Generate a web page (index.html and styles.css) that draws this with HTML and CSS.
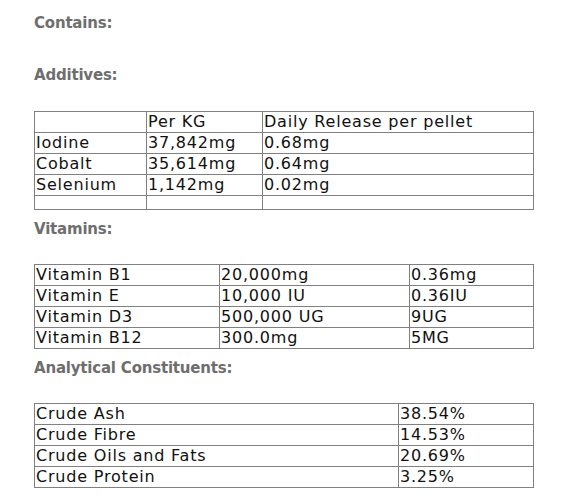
FILE: index.html
```html
<!DOCTYPE html>
<html>
<head>
<meta charset="utf-8">
<link rel="stylesheet" href="styles.css">
</head>
<body>
<div class="page">
  <h3 class="heading first">Contains:</h3>
  <h3 class="heading gap-top">Additives:</h3>
  <table class="data">
    <colgroup><col class="w112"><col class="w116"><col></colgroup>
    <tr><td></td><td>Per KG</td><td>Daily Release per pellet</td></tr>
    <tr><td>Iodine</td><td>37,842mg</td><td>0.68mg</td></tr>
    <tr><td>Cobalt</td><td>35,614mg</td><td>0.64mg</td></tr>
    <tr><td>Selenium</td><td>1,142mg</td><td>0.02mg</td></tr>
    <tr class="empty"><td></td><td></td><td></td></tr>
  </table>
  <h3 class="heading">Vitamins:</h3>
  <table class="data">
    <colgroup><col class="w185"><col class="w190"><col></colgroup>
    <tr><td>Vitamin B1</td><td>20,000mg</td><td>0.36mg</td></tr>
    <tr><td>Vitamin E</td><td>10,000 IU</td><td>0.36IU</td></tr>
    <tr><td>Vitamin D3</td><td>500,000 UG</td><td>9UG</td></tr>
    <tr><td>Vitamin B12</td><td>300.0mg</td><td>5MG</td></tr>
  </table>
  <h3 class="heading">Analytical Constituents:</h3>
  <table class="data">
    <colgroup><col class="w364"><col></colgroup>
    <tr><td>Crude Ash</td><td>38.54%</td></tr>
    <tr><td>Crude Fibre</td><td>14.53%</td></tr>
    <tr><td>Crude Oils and Fats</td><td>20.69%</td></tr>
    <tr><td>Crude Protein</td><td>3.25%</td></tr>
  </table>
</div>
</body>
</html>
```

FILE: styles.css
```css
html, body {
  margin: 0;
  padding: 0;
  background: #ffffff;
}
.page {
  padding: 0 0 0 34px;
  width: 500px;
  font-family: "DejaVu Sans", "Liberation Sans", sans-serif;
}
.heading {
  margin: 9px 0 25px 0;
  font-size: 15px;
  line-height: 20px;
  font-weight: bold;
  color: #6e6e6e;
  letter-spacing: -0.2px;
}
.heading.first {
  margin-top: 13px;
  margin-bottom: 0;
}
.heading.gap-top {
  margin-top: 32px;
  margin-bottom: 26px;
}
.data {
  width: 500px;
  border-collapse: collapse;
  table-layout: fixed;
}
.data td {
  border: 1px solid #808080;
  padding: 0 0 0 1px;
  height: 20px;
  font-size: 16px;
  line-height: 20px;
  color: #111111;
  letter-spacing: 0.8px;
  white-space: nowrap;
  overflow: hidden;
}
.data .empty td {
  height: 13px;
  line-height: 13px;
}
.w112 { width: 112px; }
.w116 { width: 116px; }
.w185 { width: 185px; }
.w190 { width: 190px; }
.w364 { width: 364px; }
```
